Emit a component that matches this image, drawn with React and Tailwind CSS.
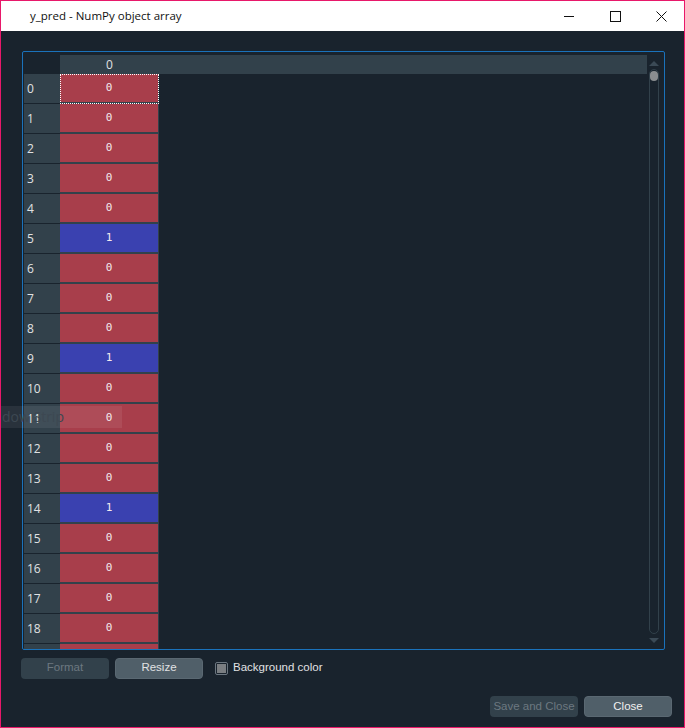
const values = [0, 0, 0, 0, 0, 1, 0, 0, 0, 1, 0, 0, 0, 0, 1, 0, 0, 0, 0, 0, 0];

function WindowControls() {
  return (
    <div className="flex items-center h-full">
      <div className="w-[46px] h-full flex items-center justify-center">
        <svg width="10" height="10" viewBox="0 0 10 10">
          <path d="M0 5.5H10" stroke="#111" strokeWidth="1" />
        </svg>
      </div>
      <div className="w-[46px] h-full flex items-center justify-center">
        <svg width="11" height="11" viewBox="0 0 11 11">
          <rect x="0.5" y="0.5" width="10" height="10" fill="none" stroke="#111" strokeWidth="1" />
        </svg>
      </div>
      <div className="w-[46px] h-full flex items-center justify-center">
        <svg width="11" height="11" viewBox="0 0 11 11">
          <path d="M0.5 0.5L10.5 10.5M10.5 0.5L0.5 10.5" stroke="#111" strokeWidth="1" />
        </svg>
      </div>
    </div>
  );
}

function Scrollbar() {
  return (
    <div className="w-[14px] flex flex-col items-center pt-[6px] pb-[6px] h-full">
      <svg width="10" height="5" viewBox="0 0 10 5">
        <path d="M5 0L10 5H0Z" fill="#3b4a56" />
      </svg>
      <div className="relative mt-[3px] w-[10px] flex-1 rounded-[5px] border border-[#32414b]">
        <div className="absolute left-[0px] top-[1px] w-[8px] h-[10px] rounded-[4px] bg-[#8a8d90]" />
      </div>
      <svg className="mt-[4px]" width="10" height="5" viewBox="0 0 10 5">
        <path d="M0 0H10L5 5Z" fill="#3b4a56" />
      </svg>
    </div>
  );
}

export default function App() {
  return (
    <div className="w-[685px] h-[728px] border border-[#e8186a] bg-[#19232d] flex flex-col overflow-hidden relative">
      {/* title bar */}
      <div className="h-[30px] bg-white flex items-center justify-between shrink-0">
        <span className="pl-[29px] text-[11.5px] text-[#111] font-['Open_Sans',sans-serif]">y_pred - NumPy object array</span>
        <WindowControls />
      </div>

      {/* table frame */}
      <div className="ml-[21px] mt-[20px] w-[643px] h-[599px] border border-[#1a72bb] rounded-[2px] pt-[3px] pl-[1px] pr-[3px] flex overflow-hidden">
        <div className="flex-1 flex flex-col overflow-hidden">
          <div className="flex h-[19px] shrink-0">
            <div className="w-[36px] bg-[#19232d]" />
            <div className="flex-1 bg-[#32414b] flex">
              <div className="w-[99px] text-center text-[12px] leading-[19px] text-[#e0e1e3] font-['Open_Sans',sans-serif]">0</div>
            </div>
          </div>
          <div className="flex flex-col overflow-hidden">
            {values.map((v, i) => (
              <div key={i} className="flex h-[30px] shrink-0">
                <div className="w-[36px] bg-[#32414b] border-b border-[#19232d] flex items-center pl-[3px] pt-[1px] text-[12px] text-[#e0e1e3] font-['Open_Sans',sans-serif]">
                  {i}
                </div>
                <div
                  className={`w-[99px] border-b-2 border-r border-[#32414b] flex justify-center pt-[7px] text-[11px] leading-[13px] text-[#f3e9ee] font-['DejaVu_Sans_Mono',monospace] ${
                    v === 1 ? "bg-[#3a41b0]" : "bg-[#a83e4b]"
                  } ${i === 0 ? "outline outline-1 outline-dotted outline-white -outline-offset-1" : ""}`}
                >
                  {v}
                </div>
              </div>
            ))}
          </div>
        </div>
        <Scrollbar />
      </div>

      {/* format row */}
      <div className="flex items-center mt-[7px] ml-[20px] h-[22px]">
        <button className="w-[88px] h-[21px] rounded-[4px] bg-[#32414b] text-[11.5px] text-[#6c7880] font-['Liberation_Sans',sans-serif]">Format</button>
        <button className="ml-[6px] w-[88px] h-[21px] rounded-[4px] bg-[#505f69] border border-[#5a6872] text-[11.5px] text-[#e0e1e3] font-['Liberation_Sans',sans-serif]">Resize</button>
        <div className="ml-[12px] w-[13px] h-[13px] rounded-[2px] border border-[#6b7680] bg-[#19232d] flex items-center justify-center">
          <div className="w-[9px] h-[9px] bg-[#7a7e82]" />
        </div>
        <span className="ml-[5px] text-[11.5px] text-[#e0e1e3] font-['Liberation_Sans',sans-serif]">Background color</span>
      </div>

      {/* bottom buttons */}
      <div className="flex justify-end mt-[17px] mr-[12px]">
        <button className="w-[88px] h-[21px] rounded-[4px] bg-[#32414b] text-[11.5px] text-[#6c7880] font-['Liberation_Sans',sans-serif]">Save and Close</button>
        <button className="ml-[6px] w-[88px] h-[21px] rounded-[4px] bg-[#505f69] border border-[#5a6872] text-[11.5px] text-[#f0f0f0] font-['Liberation_Sans',sans-serif]">Close</button>
      </div>

      {/* fading tooltip */}
      <div className="absolute left-0 top-[405px] w-[121px] h-[22px] bg-white/[0.07] text-[14px] leading-[22px] text-[#3d4852] font-['Open_Sans',sans-serif] pl-[1px]">
        dow Strip
      </div>
    </div>
  );
}
